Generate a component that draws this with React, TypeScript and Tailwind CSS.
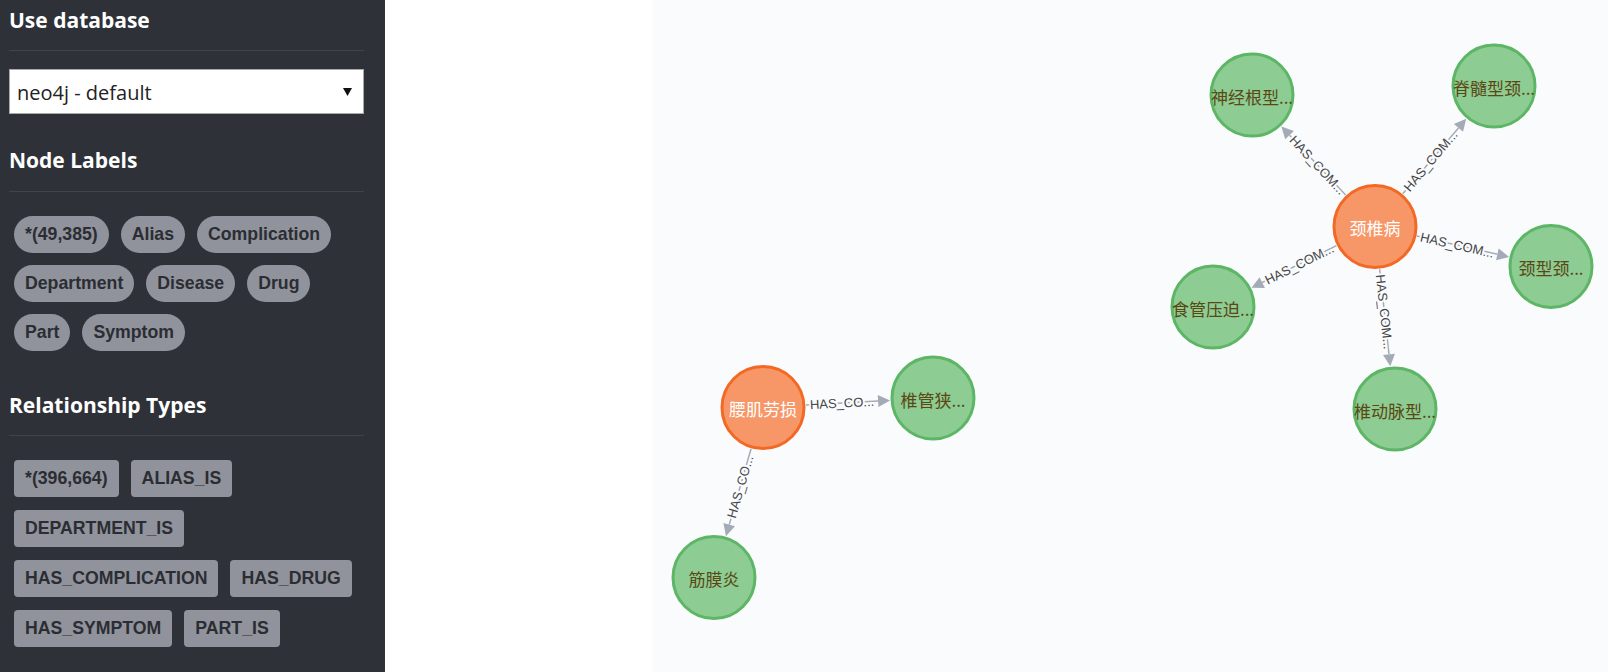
import React from "react";

const nodeLabels = ["*(49,385)", "Alias", "Complication", "Department", "Disease", "Drug", "Part", "Symptom"];
const relTypes = ["*(396,664)", "ALIAS_IS", "DEPARTMENT_IS", "HAS_COMPLICATION", "HAS_DRUG", "HAS_SYMPTOM", "PART_IS"];

type N = { id: string; x: number; y: number; label: string; orange?: boolean };

const nodes: N[] = [
  { id: "A", x: 1252, y: 95, label: "神经根型..." },
  { id: "B", x: 1494, y: 86, label: "脊髓型颈..." },
  { id: "C", x: 1375, y: 226.5, label: "颈椎病", orange: true },
  { id: "D", x: 1551, y: 266.5, label: "颈型颈..." },
  { id: "E", x: 1213, y: 307, label: "食管压迫..." },
  { id: "F", x: 1395, y: 409, label: "椎动脉型..." },
  { id: "G", x: 763, y: 407.5, label: "腰肌劳损", orange: true },
  { id: "H", x: 933, y: 398, label: "椎管狭..." },
  { id: "I", x: 714, y: 577.5, label: "筋膜炎" },
];

const edges: [string, string, string][] = [
  ["C", "A", "HAS_COM..."],
  ["C", "B", "HAS_COM..."],
  ["C", "D", "HAS_COM..."],
  ["C", "E", "HAS_COM..."],
  ["C", "F", "HAS_COM..."],
  ["G", "H", "HAS_CO..."],
  ["G", "I", "HAS_CO..."],
];

const byId = (id: string) => nodes.find((n) => n.id === id)!;

function Edge({ s, t, label }: { s: N; t: N; label: string }) {
  const dx = t.x - s.x;
  const dy = t.y - s.y;
  const d = Math.hypot(dx, dy);
  const ux = dx / d;
  const uy = dy / d;
  const R = 43;
  const sx = s.x + ux * R;
  const sy = s.y + uy * R;
  const tx = t.x - ux * R;
  const ty = t.y - uy * R;
  const L = 12;
  const W = 6;
  const bx = tx - ux * L;
  const by = ty - uy * L;
  const px = -uy;
  const py = ux;
  const mx = (sx + bx) / 2;
  const my = (sy + by) / 2;
  let ang = (Math.atan2(dy, dx) * 180) / Math.PI;
  if (ang > 90 || ang < -90) ang += 180;
  return (
    <g>
      <line x1={sx} y1={sy} x2={bx} y2={by} stroke="#a5abb6" strokeWidth={1.5} />
      <polygon
        points={`${tx},${ty} ${bx + px * W},${by + py * W} ${bx - px * W},${by - py * W}`}
        fill="#a5abb6"
      />
      <text
        x={mx}
        y={my}
        transform={`rotate(${ang} ${mx} ${my})`}
        textAnchor="middle"
        dominantBaseline="central"
        fontSize={13}
        fill="#464646"
        stroke="#f9fbfd"
        strokeWidth={4}
        paintOrder="stroke"
        fontFamily="'Liberation Sans', Arial, sans-serif"
      >
        {label}
      </text>
    </g>
  );
}

function Node({ n }: { n: N }) {
  return (
    <g>
      <circle
        cx={n.x}
        cy={n.y}
        r={41}
        fill={n.orange ? "#f79767" : "#8dcc93"}
        stroke={n.orange ? "#f36924" : "#5db665"}
        strokeWidth={3}
      />
      <text
        x={n.x}
        y={n.y + 1}
        textAnchor="middle"
        dominantBaseline="central"
        fontSize={17}
        fill={n.orange ? "#ffffff" : "#5a4714"}
        fontFamily="'Noto Sans CJK SC', 'Noto Sans', sans-serif"
      >
        {n.label}
      </text>
    </g>
  );
}

function Heading({ children, className }: { children: React.ReactNode; className: string }) {
  return (
    <div
      className={`h-[28px] leading-[28px] text-[21px] font-bold text-white font-['Open_Sans',sans-serif] ${className}`}
    >
      {children}
    </div>
  );
}

export default function App() {
  return (
    <div className="flex w-full h-[672px] overflow-hidden">
      <div className="w-[385px] shrink-0 h-full bg-[#2e3138] pl-[9px] pr-[21px]">
        <Heading className="mt-[6px]">Use database</Heading>
        <div className="mt-[16px] h-px bg-[#41444c]" />
        <div className="mt-[18px] h-[45px] bg-white border border-[#a9a9a9] flex items-center justify-between pl-[7px] pr-[11px]">
          <span className="text-[20px] leading-[28px] pt-[2px] text-[#222] font-['Open_Sans',sans-serif]">neo4j - default</span>
          <svg width="9" height="8" viewBox="0 0 9 8">
            <polygon points="0,0 9,0 4.5,8" fill="#111" />
          </svg>
        </div>
        <Heading className="mt-[32px]">Node Labels</Heading>
        <div className="mt-[17px] h-px bg-[#41444c]" />
        <div className="mt-[24px] pl-[5px] flex flex-wrap gap-x-[12px] gap-y-[12px]">
          {nodeLabels.map((l) => (
            <span
              key={l}
              className="h-[37px] px-[11px] flex items-center rounded-full bg-[#90939c] text-[#2b2d33] text-[17.7px] font-bold font-['Liberation_Sans',Arial,sans-serif]"
            >
              {l}
            </span>
          ))}
        </div>
        <Heading className="mt-[40px]">Relationship Types</Heading>
        <div className="mt-[16px] h-px bg-[#41444c]" />
        <div className="mt-[24px] pl-[5px] flex flex-wrap gap-x-[12px] gap-y-[13px]">
          {relTypes.map((l) => (
            <span
              key={l}
              className="h-[37px] px-[11px] flex items-center rounded-[4px] bg-[#90939c] text-[#2b2d33] text-[17.7px] font-bold font-['Liberation_Sans',Arial,sans-serif]"
            >
              {l}
            </span>
          ))}
        </div>
      </div>
      <div className="w-[268px] shrink-0 h-full bg-white" />
      <div className="flex-1 h-full bg-[#f9fbfd]">
        <svg width="955" height="672" viewBox="653 0 955 672">
          {edges.map(([a, b, l]) => (
            <Edge key={a + b} s={byId(a)} t={byId(b)} label={l} />
          ))}
          {nodes.map((n) => (
            <Node key={n.id} n={n} />
          ))}
        </svg>
      </div>
    </div>
  );
}
